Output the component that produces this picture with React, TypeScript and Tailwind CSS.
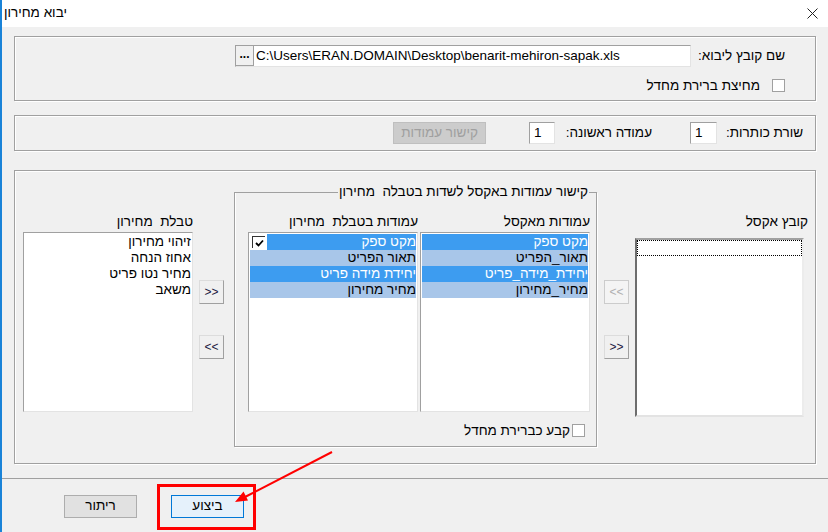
import type { ReactNode } from "react";

const EXCEL_COLS = ["מקט ספק", "תאור_הפריט", "יחידת_מידה_פריט", "מחיר_מחירון"];
const TABLE_COLS = ["מקט ספק", "תאור הפריט", "יחידת מידה פריט", "מחיר מחירון"];
const PRICE_FIELDS = ["זיהוי מחירון", "אחוז הנחה", "מחיר נטו פריט", "משאב"];

function Checkbox() {
  return <div className="w-[13px] h-[13px] shrink-0 bg-white border border-[#a0a0a0]" />;
}

function SmallButton({ label, disabled }: { label: string; disabled?: boolean }) {
  return (
    <div
      dir="ltr"
      className={`w-[25px] h-[24px] flex items-center justify-center text-[12px] leading-none ${
        disabled
          ? "bg-[#f4f4f4] border border-[#cccccc] text-[#b0b0b0]"
          : "bg-[#f0f0f0] border border-[#dcdcdc] border-r-[#a0a0a0] border-b-[#a0a0a0] text-[#1a1a40]"
      }`}
    >
      {label}
    </div>
  );
}

function HiRow({ text, strong, children }: { text: string; strong: boolean; children?: ReactNode }) {
  return (
    <div className="flex h-4">
      <div
        className={`flex-1 leading-4 whitespace-pre ${
          strong ? "bg-[#3d9cf0] text-white" : "bg-[#a8c6e9] text-black"
        }`}
      >
        {text}
      </div>
      {children}
    </div>
  );
}

function ListBox({ children }: { children?: ReactNode }) {
  return (
    <div className="h-[180px] bg-white border border-t-[#a0a0a0] border-l-[#a0a0a0] border-r-[#e3e3e3] border-b-[#e3e3e3] p-px">
      {children}
    </div>
  );
}

export default function App() {
  return (
    <div className="relative w-[828px] h-[532px] overflow-hidden bg-[#f0f0f0] border-l-2 border-[#1a83d8] text-[13.5px] text-black font-['Liberation_Sans','DejaVu_Sans',sans-serif] flex flex-col">
      {/* title bar */}
      <div className="h-[27px] shrink-0 bg-white flex items-center justify-between pl-[2px] pr-[10px]">
        <span>יבוא מחירון</span>
        <svg width="11" height="11" viewBox="0 0 11 11" className="text-[#222]">
          <path d="M0.5 0.5 L10.5 10.5 M10.5 0.5 L0.5 10.5" stroke="currentColor" strokeWidth="1" />
        </svg>
      </div>

      <div dir="rtl" className="flex flex-col px-[12px]">
        {/* file row */}
        <div className="mt-[9px] h-[65px] border border-[#a0a0a0] shadow-[inset_1px_1px_0_#fff,1px_1px_0_#fff] pr-[30px] pt-[8px]">
          <div className="flex items-center h-[22px]">
            <div className="w-[94px] leading-4">שם קובץ ליבוא:</div>
            <div
              dir="ltr"
              className="w-[456px] h-[22px] flex bg-white border border-t-[#a0a0a0] border-l-[#a0a0a0] border-r-[#e3e3e3] border-b-[#e3e3e3]"
            >
              <div className="w-[18px] h-full flex items-center justify-center bg-[#f0f0f0] border-r border-b border-[#a0a0a0] font-bold text-[12px] leading-none pb-[3px]">
                ...
              </div>
              <div className="pl-[2px] leading-[20px] whitespace-pre">
                C:\Users\ERAN.DOMAIN\Desktop\benarit-mehiron-sapak.xls
              </div>
            </div>
          </div>
          <div className="flex items-center mt-[12px] h-[13px]">
            <Checkbox />
            <span className="ms-[12px] leading-4">מחיצת ברירת מחדל</span>
          </div>
        </div>

        {/* header row settings */}
        <div className="mt-[14px] h-[36px] border border-[#a0a0a0] shadow-[inset_1px_1px_0_#fff,1px_1px_0_#fff] pr-[12px] flex items-center">
          <div className="w-[86px] leading-4">שורת כותרות:</div>
          <div className="w-[27px] h-[22px] bg-white border border-t-[#a0a0a0] border-l-[#a0a0a0] border-r-[#e3e3e3] border-b-[#e3e3e3] pl-[4px] leading-[20px] text-left">
            1
          </div>
          <div className="ms-[38px] w-[97px] leading-4">עמודה ראשונה:</div>
          <div className="w-[26px] h-[22px] bg-white border border-t-[#a0a0a0] border-l-[#a0a0a0] border-r-[#e3e3e3] border-b-[#e3e3e3] pl-[4px] leading-[20px] text-left">
            1
          </div>
          <div className="ms-[43px] w-[93px] h-[22px] bg-[#cccccc] border border-[#bfbfbf] text-[#9f9f9f] flex items-center justify-center">
            קישור עמודות
          </div>
        </div>

        {/* mapping */}
        <div className="mt-[19px] h-[294px] border border-[#a0a0a0] shadow-[inset_1px_1px_0_#fff,1px_1px_0_#fff] pr-[7px] pl-[8px] flex items-start">
          {/* excel file */}
          <div className="w-[173px] flex flex-col">
            <div className="mt-[43px] h-4 leading-4">קובץ אקסל</div>
            <div className="self-end mt-[8px] w-[169px] h-[179px] bg-white border-2 border-t-[#a0a0a0] border-l-[#6d6d6d] border-r-[#ececec] border-b-[#e3e3e3]">
              <div className="h-4 border border-dotted border-black" />
            </div>
          </div>

          <div className="ms-[6px] flex flex-col">
            <div className="mt-[109px]">
              <SmallButton label="<<" disabled />
            </div>
            <div className="mt-[31px]">
              <SmallButton label=">>" />
            </div>
          </div>

          {/* link group */}
          <fieldset className="ms-[7px] mt-[13px] w-[363px] h-[263px] border border-[#a0a0a0] shadow-[inset_1px_0_0_#fff,1px_1px_0_#fff]">
            <legend className="ms-[7px] px-px leading-4 whitespace-pre">קישור עמודות באקסל לשדות בטבלה  מחירון</legend>
            <div className="flex pr-[6px] pl-[12px] pt-[14px]">
              <div className="w-[170px] flex flex-col">
                <div className="h-4 leading-4 pe-[2px]">עמודות מאקסל</div>
                <div className="mt-[2px]">
                  <ListBox>
                    {EXCEL_COLS.map((t, i) => (
                      <HiRow key={t} text={t} strong={i % 2 === 0} />
                    ))}
                  </ListBox>
                </div>
              </div>
              <div className="ms-[2px] w-[170px] flex flex-col">
                <div className="h-4 leading-4 pe-[2px] whitespace-pre">עמודות בטבלת  מחירון</div>
                <div className="mt-[2px]">
                  <ListBox>
                    {TABLE_COLS.map((t, i) => (
                      <HiRow key={t} text={t} strong={i % 2 === 0}>
                        {i === 0 && (
                          <div className="w-[17px] bg-white flex items-center justify-center">
                            <div className="w-[13px] h-[12px] bg-white border-t border-l border-[#333] flex items-center justify-center">
                              <svg width="9" height="8" viewBox="0 0 9 8">
                                <path d="M1 4 L3.5 6.5 L8 1.5" stroke="#000" strokeWidth="1.8" fill="none" />
                              </svg>
                            </div>
                          </div>
                        )}
                      </HiRow>
                    ))}
                  </ListBox>
                </div>
              </div>
            </div>
            <div className="flex items-center mt-[12px] pr-[11px] h-[13px]">
              <Checkbox />
              <span className="ms-[2px] leading-4">קבע כברירת מחדל</span>
            </div>
          </fieldset>

          <div className="ms-[10px] flex flex-col">
            <div className="mt-[109px]">
              <SmallButton label=">>" />
            </div>
            <div className="mt-[31px]">
              <SmallButton label="<<" />
            </div>
          </div>

          {/* price table */}
          <div className="ms-[6px] w-[170px] flex flex-col">
            <div className="mt-[43px] h-4 leading-4 pe-[3px] whitespace-pre">טבלת  מחירון</div>
            <div className="mt-[2px]">
              <ListBox>
                {PRICE_FIELDS.map((t) => (
                  <div key={t} className="h-4 leading-4">
                    {t}
                  </div>
                ))}
              </ListBox>
            </div>
          </div>
        </div>
      </div>

      <div className="mt-[14px] h-px bg-[#a0a0a0]" />

      {/* footer buttons */}
      <div className="mt-[16px] flex pl-[62px] gap-[34px]">
        <div className="w-[73px] h-[23px] bg-[#e1e1e1] border border-[#adadad] flex items-center justify-center">
          ריתור
        </div>
        <div className="w-[73px] h-[23px] bg-[#e5f1fb] border border-[#0078d7] flex items-center justify-center">
          ביצוע
        </div>
      </div>

      {/* annotation */}
      <svg className="absolute left-[-2px] top-0 pointer-events-none" width="828" height="532">
        <rect x="158.5" y="485.5" width="96" height="43" fill="none" stroke="#ff0000" strokeWidth="3" />
        <line x1="332" y1="452" x2="244" y2="497.5" stroke="#ff0000" strokeWidth="2" />
        <polygon points="235,502 243.5,491.5 248,500.5" fill="#ff0000" />
      </svg>
    </div>
  );
}
